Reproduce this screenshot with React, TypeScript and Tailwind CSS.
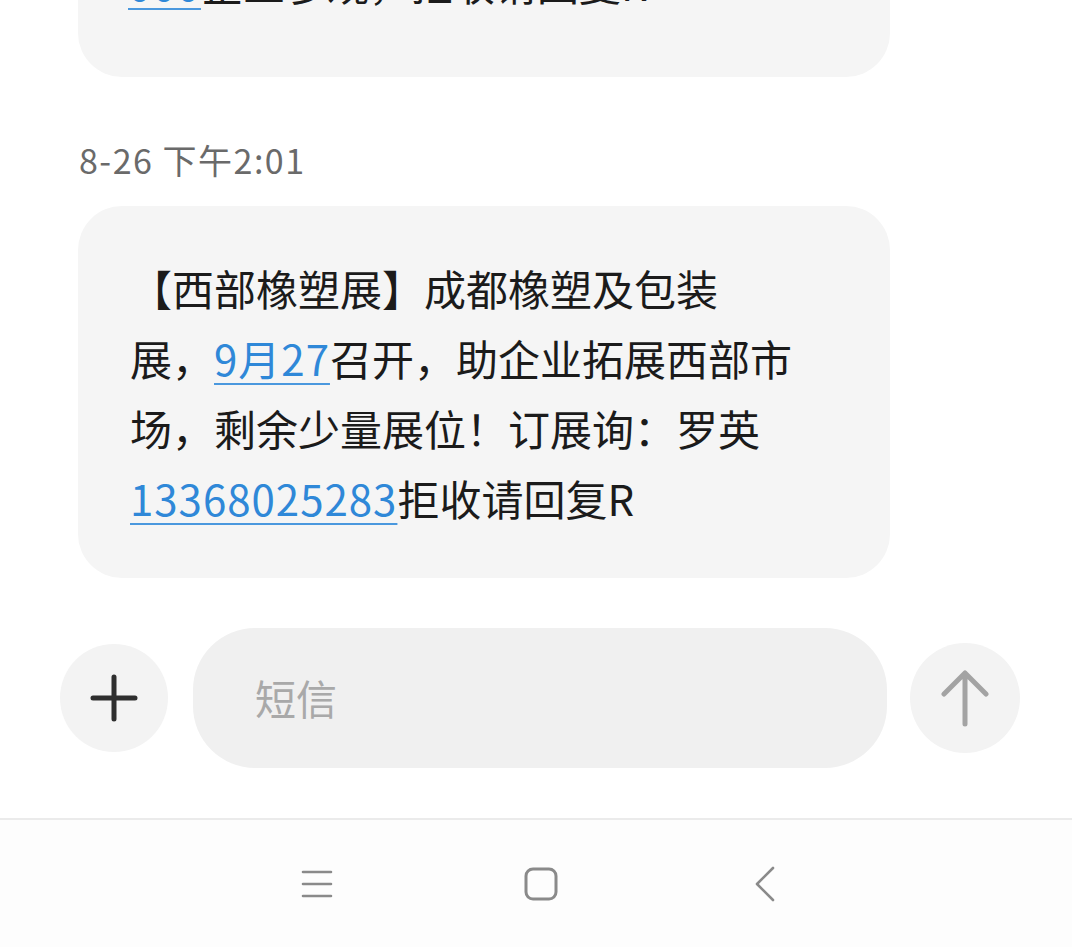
import React from 'react'

const font = { fontFamily: '"Noto Sans CJK SC", "Noto Sans", sans-serif' }

function Link({ children }: { children: React.ReactNode }) {
  return (
    <span className="text-[#2f88d8] underline decoration-[2px] underline-offset-[7px] decoration-[#4a98de] tracking-[1px]">
      {children}
    </span>
  )
}

export default function App() {
  return (
    <div className="w-[1072px] h-[947px] overflow-hidden bg-white flex flex-col" style={font}>
      {/* messages */}
      <div className="flex-1 flex flex-col pl-[78px] -mt-[152px]">
        <div className="w-[812px] bg-[#f5f5f5] rounded-[44px] pt-[100px] pb-[59px] pl-[50px]">
          <p className="text-[42px] leading-[70px] text-[#1b1b1b] w-[665px]">
            <Link>000</Link>企业参观，拒收请回复R
          </p>
        </div>

        <div className="mt-[58px] mb-[21px] pl-[1px] text-[34px] leading-[50px] text-[#6a6a6a] tracking-[1.5px]">
          8-26 下午2:01
        </div>

        <div className="w-[812px] bg-[#f5f5f5] rounded-[44px] pt-[47px] pb-[45px] pl-[52px]">
          <p className="text-[42px] leading-[70px] text-[#1b1b1b] w-[665px]">
            【西部橡塑展】成都橡塑及包装展，<Link>9月27</Link>召开，助企业拓展西部市场，剩余少量展位！订展询：罗英
            <Link>13368025283</Link>拒收请回复R
          </p>
        </div>
      </div>

      {/* input row */}
      <div className="flex items-center pl-[60px] mb-[50px]">
        <div className="w-[108px] h-[108px] rounded-full bg-[#f3f3f3] flex items-center justify-center">
          <svg width="48" height="48" viewBox="0 0 48 48" fill="none" stroke="#2e2e2e" strokeWidth="5" strokeLinecap="round">
            <path d="M24 3v42M3 24h42" />
          </svg>
        </div>
        <div className="ml-[25px] w-[694px] h-[140px] rounded-[62px] bg-[#f0f0f0] flex items-center pl-[62px]">
          <span className="text-[41px] text-[#a9a9a9]">短信</span>
        </div>
        <div className="ml-[23px] w-[110px] h-[110px] rounded-full bg-[#f3f3f3] flex items-center justify-center">
          <svg width="48" height="58" viewBox="0 0 48 58" fill="none" stroke="#a3a3a3" strokeWidth="5" strokeLinecap="round" strokeLinejoin="round">
            <path d="M24 4v51M3 25L24 4l21 21" />
          </svg>
        </div>
      </div>

      {/* nav bar */}
      <div className="h-[129px] border-t-[2px] border-[#ebebeb] bg-[#fdfdfd] flex items-center pl-[205px]">
        <div className="w-[224px] flex justify-center">
          <svg width="32" height="28" viewBox="0 0 32 28" fill="none" stroke="#8a8a8a" strokeWidth="2.6" strokeLinecap="round">
            <path d="M2 2h28M2 14h28M2 26h28" />
          </svg>
        </div>
        <div className="w-[224px] flex justify-center">
          <svg width="34" height="34" viewBox="0 0 34 34" fill="none" stroke="#8a8a8a" strokeWidth="3">
            <rect x="2" y="2" width="30" height="30" rx="7" />
          </svg>
        </div>
        <div className="w-[224px] flex justify-center">
          <svg width="22" height="36" viewBox="0 0 22 36" fill="none" stroke="#8a8a8a" strokeWidth="2.6" strokeLinecap="round" strokeLinejoin="round">
            <path d="M19 2L3 18l16 16" />
          </svg>
        </div>
      </div>
    </div>
  )
}
